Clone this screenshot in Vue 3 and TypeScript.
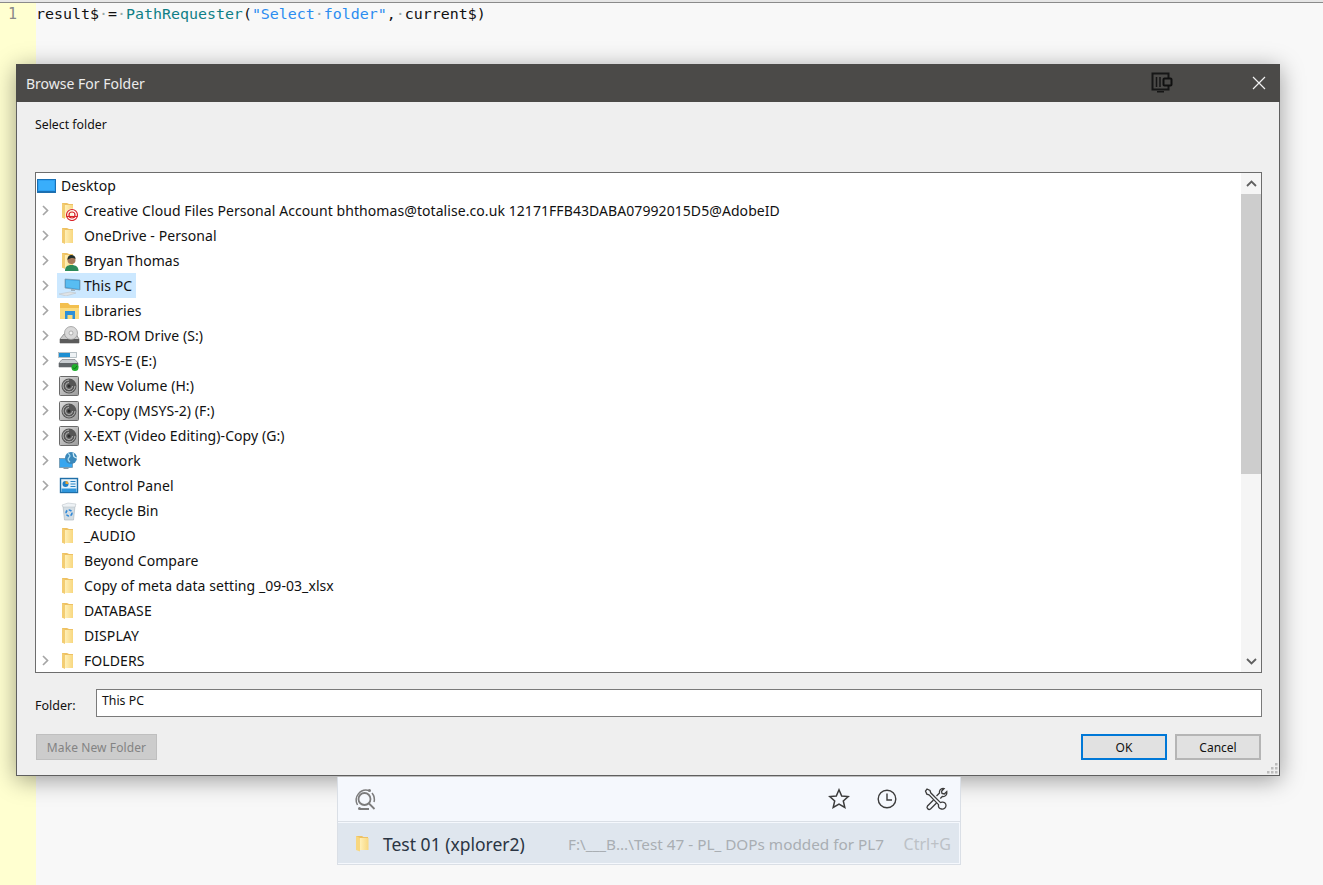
<script setup lang="ts">
interface Row { label: string; icon: string; arrow: boolean; selected?: boolean }
const rows: Row[] = [
  { label: 'Creative Cloud Files Personal Account bhthomas@totalise.co.uk 12171FFB43DABA07992015D5@AdobeID', icon: 'cc', arrow: true },
  { label: 'OneDrive - Personal', icon: 'folder', arrow: true },
  { label: 'Bryan Thomas', icon: 'user', arrow: true },
  { label: 'This PC', icon: 'pc', arrow: true, selected: true },
  { label: 'Libraries', icon: 'lib', arrow: true },
  { label: 'BD-ROM Drive (S:)', icon: 'bd', arrow: true },
  { label: 'MSYS-E (E:)', icon: 'drive', arrow: true },
  { label: 'New Volume (H:)', icon: 'vol', arrow: true },
  { label: 'X-Copy (MSYS-2) (F:)', icon: 'vol', arrow: true },
  { label: 'X-EXT (Video Editing)-Copy (G:)', icon: 'vol', arrow: true },
  { label: 'Network', icon: 'net', arrow: true },
  { label: 'Control Panel', icon: 'cp', arrow: true },
  { label: 'Recycle Bin', icon: 'bin', arrow: false },
  { label: '_AUDIO', icon: 'folder', arrow: false },
  { label: 'Beyond Compare', icon: 'folder', arrow: false },
  { label: 'Copy of meta data setting _09-03_xlsx', icon: 'folder', arrow: false },
  { label: 'DATABASE', icon: 'folder', arrow: false },
  { label: 'DISPLAY', icon: 'folder', arrow: false },
  { label: 'FOLDERS', icon: 'folder', arrow: true },
]
const grip: [number, number][] = [[9, 1], [5, 5], [9, 5], [1, 9], [5, 9], [9, 9]]
</script>

<template>
  <div class="app">
    <svg class="defs" width="0" height="0" aria-hidden="true">
      <defs>
        <linearGradient id="fold" x1="0" x2="1" y1="0" y2="0">
          <stop offset="0" stop-color="#fff0b8" />
          <stop offset="1" stop-color="#f8d77f" />
        </linearGradient>
        <linearGradient id="volg" x1="0" x2="1" y1="0" y2="1">
          <stop offset="0" stop-color="#dcdcdc" />
          <stop offset="1" stop-color="#9a9a9a" />
        </linearGradient>
        <symbol id="i-folder" viewBox="0 0 24 20">
          <path d="M5 2h5l2 1h4v13.500H5z" fill="#eec163" />
          <path d="M8 4h8v13H8z" fill="url(#fold)" />
          <path d="M5 2v14.500L8 18V4z" fill="#f3cd72" />
        </symbol>
        <symbol id="i-cc" viewBox="0 0 24 20">
          <use href="#i-folder" width="24" height="20" />
          <circle cx="15" cy="14" r="6.500" fill="#fff" opacity=".75" />
          <circle cx="15" cy="14" r="5.500" fill="none" stroke="#d8232a" stroke-width="1.200" />
          <circle cx="15" cy="14" r="3" fill="none" stroke="#d8232a" stroke-width="1.200" />
          <path d="M9.500 15.500h11" stroke="#d8232a" stroke-width="1.100" />
        </symbol>
        <symbol id="i-user" viewBox="0 0 24 20">
          <use href="#i-folder" width="24" height="20" />
          <path d="M8 20c0-4 2-6 6.500-6s7 2 7 6z" fill="#2c8a5a" />
          <circle cx="14.500" cy="9" r="4" fill="#a9795a" />
          <path d="M10.500 9c0-4 2-5 4-5s4 1 4 4c-2-1.500-5-1.500-8 1z" fill="#23302c" />
        </symbol>
        <symbol id="i-pc" viewBox="0 0 24 20">
          <path d="M8 3l15 1v10L8 12z" fill="#3aa0e0" stroke="#7f98a8" stroke-width=".7" />
          <path d="M9 4l13 1v8L9 11z" fill="#58bdf2" />
          <path d="M14 13h4v2h-4z" fill="#9fb2bf" />
          <path d="M2 18l11-2 6 1-10 3z" fill="#dfe3e6" stroke="#b8bec3" stroke-width=".5" />
        </symbol>
        <symbol id="i-lib" viewBox="0 0 24 20">
          <path d="M3 2h8l2 2h9v14H3z" fill="#f3c04f" />
          <path d="M3 7h19v11H3z" fill="#fbdb7f" />
          <path d="M8 10h10v8h-2.500v-4h-5v4H8z" fill="#2d8fd8" />
        </symbol>
        <symbol id="i-bd" viewBox="0 0 24 20">
          <path d="M3 13l4-5h12l3 5v4H3z" fill="#c9c9c9" stroke="#777" stroke-width=".7" />
          <path d="M3 13h19v4H3z" fill="#5b5b5b" />
          <circle cx="14" cy="7" r="6.500" fill="#d8d8d8" stroke="#8f8f8f" stroke-width=".7" />
          <circle cx="14" cy="7" r="2" fill="#f4f4f4" stroke="#999" stroke-width=".7" />
        </symbol>
        <symbol id="i-drive" viewBox="0 0 24 20">
          <rect x="1.500" y="1.500" width="18" height="5" fill="#eef2f5" stroke="#a9b3ba" stroke-width=".8" />
          <rect x="2" y="2" width="11" height="4" fill="#1e8fd2" />
          <path d="M2 12l3-3.500h13l3 3.500v4H2z" fill="#c8ccd0" stroke="#7b8085" stroke-width=".7" />
          <path d="M2 12h19v4H2z" fill="#5f6468" />
          <circle cx="18" cy="16.500" r="3.500" fill="#1fae2c" />
          <path d="M16 16.500l1.500 1.500 2.500-3" stroke="#0c6f16" stroke-width=".9" fill="none" />
        </symbol>
        <symbol id="i-vol" viewBox="0 0 24 20">
          <rect x="2.500" y=".500" width="19" height="19" rx="1" fill="url(#volg)" stroke="#6a6a6a" />
          <circle cx="12" cy="10" r="7.500" fill="#565656" />
          <path d="M12 4a6 6 0 1 0 6 6M12 6.500a3.500 3.500 0 1 0 3.500 3.500" fill="none" stroke="#b5b5b5" stroke-width="1" />
          <circle cx="12" cy="10" r="1.500" fill="#2b2b2b" />
        </symbol>
        <symbol id="i-net" viewBox="0 0 24 20">
          <rect x="2.500" y="7.500" width="13" height="9" fill="#37a6ef" stroke="#6a8aa0" stroke-width=".7" />
          <path d="M6.500 16.500h5V18h-5z" fill="#8497a3" />
          <circle cx="14" cy="7" r="6" fill="#3b88ba" />
          <path d="M11 2.500c2 1 2.500 2.500 1 4s-1 3 1 4.500" fill="none" stroke="#a9dcf2" stroke-width="1.300" />
          <path d="M16 2c1 2 0 3 1.500 4s2 1 2.500 1" fill="none" stroke="#d4eff9" stroke-width="1.300" />
        </symbol>
        <symbol id="i-cp" viewBox="0 0 24 20">
          <rect x="3.500" y="2.500" width="17" height="14" fill="#e4f2fb" stroke="#1f6fa8" stroke-width="1.400" />
          <rect x="4.500" y="12.500" width="15" height="3.500" fill="#2f96dc" />
          <circle cx="8.500" cy="8" r="3" fill="#1f7fc6" />
          <path d="M8.500 8V5a3 3 0 0 1 3 3z" fill="#f0a52d" />
          <path d="M13.500 5.500h5M13.500 8h5M13.500 10.500h5" stroke="#2a85c6" stroke-width="1.200" />
        </symbol>
        <symbol id="i-bin" viewBox="0 0 24 20">
          <path d="M6 5l1.500 14h9L18 5z" fill="#d4dde3" stroke="#aab4bb" stroke-width=".6" />
          <path d="M5 4l6-2 8 1-1 3H6z" fill="#eef2f5" stroke="#b4bdc3" stroke-width=".5" />
          <circle cx="12" cy="12" r="3" fill="none" stroke="#2f88d8" stroke-width="1.600" stroke-dasharray="3 1.500" />
        </symbol>
      </defs>
    </svg>

    <div class="topbar"></div>

    <div class="editor">
      <div class="gutter">1</div>
      <pre class="code"><span class="k">result$</span><span class="dot">·</span><span class="k">=</span><span class="dot">·</span><span class="fn">PathRequester</span><span class="k">(</span><span class="str">"Select<span class="dot">·</span>folder"</span><span class="k">,</span><span class="dot">·</span><span class="k">current$)</span></pre>
    </div>

    <section class="dialog">
      <header class="titlebar">
        <span class="title">Browse For Folder</span>
        <svg class="df" width="24" height="24" viewBox="0 0 24 24">
          <path d="M3.500 2.500h16v16h-16z" fill="none" stroke="#161616" stroke-width="2" />
          <path d="M7.500 6v10M11 6v10" stroke="#161616" stroke-width="1.500" />
          <path d="M8 20h7v1.500H8z" fill="#161616" />
          <rect x="14.500" y="7.500" width="8" height="7" rx="1" fill="#4b4a48" stroke="#101010" stroke-width="2" />
        </svg>
        <svg class="close" width="14" height="14" viewBox="0 0 14 14">
          <path d="M1 1l12 12M13 1L1 13" stroke="#f2f2f2" stroke-width="1.200" />
        </svg>
      </header>

      <div class="body">
        <p class="prompt">Select folder</p>

        <div class="tree">
          <div class="rows">
            <div class="row root">
              <svg width="20" height="16" viewBox="0 0 20 16" class="desk">
                <rect x=".5" y="1.500" width="18" height="12" fill="#2ea1f2" stroke="#1870b5" />
                <rect x="2" y="3" width="15" height="9" fill="#39aefb" />
                <path d="M0 14h19v1H0z" fill="#1f6fae" />
              </svg>
              <span class="lbl">Desktop</span>
            </div>
            <div v-for="r in rows" :key="r.label" class="row">
              <span class="arrow">
                <svg v-if="r.arrow" width="7" height="11" viewBox="0 0 7 11">
                  <path d="M1 1l4.500 4.500L1 10" fill="none" stroke="#a6a6a6" stroke-width="1.700" />
                </svg>
              </span>
              <span class="item" :class="{ sel: r.selected }">
                <svg class="ico" width="24" height="20"><use :href="'#i-' + r.icon" width="24" height="20" /></svg>
                <span class="lbl">{{ r.label }}</span>
              </span>
            </div>
          </div>
          <div class="scroll">
            <button class="sbtn" aria-label="up">
              <svg width="11" height="7" viewBox="0 0 11 7"><path d="M1 6l4.500-4.500L10 6" fill="none" stroke="#606060" stroke-width="1.800" /></svg>
            </button>
            <div class="track"><div class="thumb"></div></div>
            <button class="sbtn" aria-label="down">
              <svg width="11" height="7" viewBox="0 0 11 7"><path d="M1 1l4.500 4.500L10 1" fill="none" stroke="#606060" stroke-width="1.800" /></svg>
            </button>
          </div>
        </div>

        <div class="folder-row">
          <span class="folder-lbl">Folder:</span>
          <div class="input">This PC</div>
        </div>

        <div class="actions">
          <button class="btn mk">Make New Folder</button>
          <span class="spacer"></span>
          <button class="btn ok">OK</button>
          <button class="btn cancel">Cancel</button>
        </div>
      </div>

      <svg class="grip" width="12" height="12" viewBox="0 0 12 12">
        <rect v-for="(g, i) in grip" :key="i" :x="g[0]" :y="g[1]" width="2.500" height="2.500" fill="#bcbcbc" />
      </svg>
    </section>

    <section class="palette">
      <div class="search">
        <svg width="26" height="26" viewBox="0 0 26 26" class="s-ico">
          <circle cx="12.500" cy="13" r="6" fill="none" stroke="#7c7c7c" stroke-width="1.800" />
          <path d="M17 17.500l5.500 5.500M8 23h9" fill="none" stroke="#7c7c7c" stroke-width="1.800" />
          <path d="M5.500 19A10 10 0 0 1 17 4.500M20 7a10 10 0 0 1 2 9" fill="none" stroke="#7c7c7c" stroke-width="1.500" />
          <circle cx="17.500" cy="4.500" r="1.500" fill="#7c7c7c" />
          <circle cx="7.500" cy="22.500" r="1.500" fill="#7c7c7c" />
        </svg>
        <span class="spacer"></span>
        <svg width="22" height="22" viewBox="0 0 22 22">
          <path d="M11 1.800l2.700 6.200 6.500.6-4.900 4.300 1.500 6.500L11 16l-5.800 3.400 1.500-6.500-4.900-4.300 6.500-.6z" fill="none" stroke="#3c3c3c" stroke-width="1.500" />
        </svg>
        <svg width="22" height="22" viewBox="0 0 22 22">
          <circle cx="11" cy="11" r="8.800" fill="none" stroke="#3c3c3c" stroke-width="1.400" />
          <path d="M11 5.500V12h5" fill="none" stroke="#3c3c3c" stroke-width="1.400" />
        </svg>
        <svg width="24" height="24" viewBox="0 0 24 24">
          <path d="M3 2l3 1.500.7 2.300 9.800 9.800 1.500-.4c2-.4 4 1 4 3.300s-2 4-4.500 3.500-3.300-2.600-3-4.400L5 7.800l-2.200-.7L1.500 4z" fill="none" stroke="#3c3c3c" stroke-width="1.300" />
          <path d="M12.500 9l3-3c-.5-2.500 1-4.500 3.500-4.500l1 .2-2.500 2.500.5 2.300 2.300.5 2.500-2.500c.5 3-1.500 5.500-4.500 5l-2 2M9.500 13l-6 6c-1.500 2 1 4.500 3 3l6-6" fill="none" stroke="#3c3c3c" stroke-width="1.300" />
        </svg>
      </div>
      <div class="result">
        <svg class="r-ico" width="16" height="18" viewBox="0 0 16 18">
          <path d="M1 2h6l1.500 1H13v13H1z" fill="#eec163" />
          <path d="M5 4h8.500v12H5z" fill="url(#fold)" />
          <path d="M1 2v14l4 1.500V4z" fill="#f8d77f" />
        </svg>
        <span class="r-name">Test 01 (xplorer2)</span>
        <span class="r-path">F:\___B...\Test 47 - PL_ DOPs modded for PL7</span>
        <span class="r-key">Ctrl+G</span>
      </div>
    </section>
  </div>
</template>

<style>
html, body { margin: 0; background: #f8f8f8; overflow: hidden; }
</style>

<style scoped>
.app {
  position: relative;
  width: 1323px;
  height: 885px;
  overflow: hidden;
  background: #f8f8f8;
  font-family: "Noto Sans", "Open Sans", sans-serif;
  display: flex;
  flex-direction: column;
}
.defs { position: absolute; }
.topbar {
  height: 2px;
  background: #e6e6e6;
  border-bottom: 1px solid #8a8a8a;
  flex: none;
}
.editor { flex: 1; display: flex; }
.gutter {
  width: 28px;
  padding-left: 8px;
  background: #ffffd0;
  color: #8a8a8a;
  font: 15px/22px "DejaVu Sans Mono", monospace;
}
.code {
  margin: 0;
  font: 14.95px/22px "DejaVu Sans Mono", monospace;
  color: #111;
}
.k { color: #111; }
.fn { color: #0f7f86; }
.str { color: #2b8cf0; }
.dot { color: #9aa; }

.dialog {
  position: absolute;
  left: 16px;
  top: 64px;
  width: 1264px;
  height: 712px;
  box-sizing: border-box;
  border: 1px solid #5f5f5f;
  border-top: 0;
  background: #efefef;
  display: flex;
  flex-direction: column;
  box-shadow: 0 4px 22px rgba(0, 0, 0, .38);
}
.titlebar {
  height: 38px;
  margin: 0 -1px;
  flex: none;
  background: #4b4a48;
  display: flex;
  align-items: center;
  padding: 0 14px 0 10px;
}
.title { color: #ececec; font-size: 14px; flex: 1; }
.df { margin-right: 79px; }
.body {
  flex: 1;
  display: flex;
  flex-direction: column;
  padding: 0 17px 15px 18px;
  min-height: 0;
}
.prompt { margin: 15px 0 0; height: 55px; font-size: 12.3px; line-height: 16px; color: #111; }
.tree {
  height: 501px;
  box-sizing: border-box;
  border: 1px solid #6d6d6d;
  background: #fff;
  display: flex;
  overflow: hidden;
  flex: none;
}
.rows { flex: 1; min-width: 0; overflow: hidden; }
.row {
  height: 25px;
  display: flex;
  align-items: center;
  color: #111;
  font-size: 14px;
  letter-spacing: .07px;
  white-space: nowrap;
}
.root { padding-left: 1px; gap: 4px; }
.desk { flex: none; }
.arrow { width: 21px; flex: none; display: flex; justify-content: center; padding-right: 2px; box-sizing: border-box; }
.item { display: inline-flex; align-items: center; height: 25px; padding-right: 4px; }
.item.sel { background: #cce8ff; }
.ico { flex: none; margin-right: 3px; }
.scroll { width: 20px; flex: none; margin-right: 0; display: flex; flex-direction: column; background: #f5f5f5; }
.sbtn {
  height: 21px;
  border: 0;
  padding: 0;
  background: #f5f5f5;
  display: flex;
  align-items: center;
  justify-content: center;
  flex: none;
}
.track { flex: 1; }
.thumb { height: 280px; background: #cdcdcd; }

.folder-row { display: flex; align-items: center; margin-top: 16px; height: 28px; }
.folder-lbl { width: 61px; flex: none; font-size: 12.5px; padding-top: 4px; color: #111; }
.input {
  flex: 1;
  height: 28px;
  box-sizing: border-box;
  border: 1px solid #7a7a7a;
  background: #fff;
  font-size: 12.3px;
  line-height: 22px;
  padding-left: 5px;
  color: #111;
}
.actions { display: flex; margin-top: 17px; gap: 8px; padding: 0 1px; }
.spacer { flex: 1; }
.btn {
  height: 26px;
  box-sizing: border-box;
  font-family: inherit;
  font-size: 12px;
  padding: 0;
  color: #111;
  background: #e1e1e1;
  border: 1px solid #adadad;
}
.mk { width: 121px; background: #ccc; border-color: #bfbfbf; color: #838383; letter-spacing: .1px; }
.ok { width: 86px; border: 2px solid #0078d7; }
.cancel { width: 86px; border-width: 2px; border-color: #b5b5b5; }
.grip { position: absolute; right: 1px; bottom: 1px; }

.palette {
  position: absolute;
  left: 337px;
  top: 777px;
  width: 624px;
  height: 88px;
  box-sizing: border-box;
  border: 1px solid #dadfe6;
  border-top: 0;
  background: #f5f8fd;
  display: flex;
  flex-direction: column;
}
.search {
  height: 45px;
  flex: none;
  box-sizing: border-box;
  border-bottom: 1px solid #dadfe6;
  display: flex;
  align-items: center;
  padding: 0 12px 0 14px;
  gap: 26px;
}
.s-ico { margin-right: -26px; }
.result {
  flex: 1;
  margin: 1px 1px 1px 0;
  background: #dfe6ee;
  display: flex;
  align-items: center;
  white-space: nowrap;
}
.r-ico { margin-left: 17px; flex: none; }
.r-name { margin-left: 12px; padding-top: 1px; width: 185px; font-size: 17.5px; color: #2b3543; flex: none; }
.r-path { font-size: 15.3px; color: #a9aeb3; flex: 1; padding-top: 1px; }
.r-key { font-size: 16px; color: #bcc1c6; margin-right: 8px; padding-top: 1px; }
</style>
